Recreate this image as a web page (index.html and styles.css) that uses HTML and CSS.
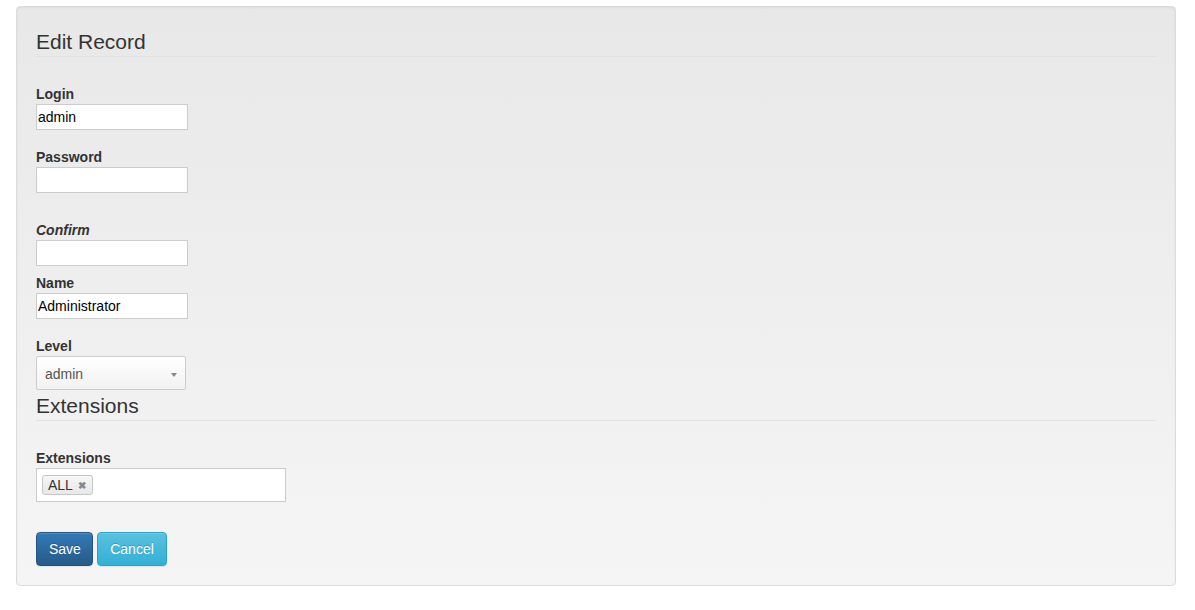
FILE: index.html
```html
<!DOCTYPE html>
<html lang="en">
<head>
    <meta charset="UTF-8">
    <title>Edit Record</title>
    <link rel="stylesheet" href="styles.css">
</head>
<body>
<form class="well">
    <div class="legend">Edit Record</div>

    <div class="field">
        <label for="login">Login</label>
        <input id="login" type="text" value="admin">
    </div>
    <div class="field field-loose">
        <label for="password">Password</label>
        <input id="password" type="password">
    </div>
    <div class="field field-tight">
        <label for="confirm"><em>Confirm</em></label>
        <input id="confirm" type="password">
    </div>
    <div class="field">
        <label for="name">Name</label>
        <input id="name" type="text" value="Administrator">
    </div>
    <div class="field field-last">
        <label>Level</label>
        <div class="select">
            <span>admin</span>
            <b class="arrow"></b>
        </div>
    </div>

    <div class="legend">Extensions</div>

    <div class="field field-buttons">
        <label>Extensions</label>
        <div class="tags">
            <span class="tag">ALL <b class="tag-close">&#10006;</b></span>
        </div>
    </div>

    <div class="buttons">
        <button type="button" class="btn btn-primary">Save</button>
        <button type="button" class="btn btn-info">Cancel</button>
    </div>
</form>
</body>
</html>
```

FILE: styles.css
```css
 body{
     margin: 0;
     padding: 6px 19px 0 16px;
     background: #fff;
     font-family: "Liberation Sans", Arial, sans-serif;
     font-size: 14px;
     color: #333;
 }
 .well{
     padding: 19px;
     border: 1px solid #dcdcdc;
     border-radius: 4px;
     background-image: linear-gradient(to bottom, #e8e8e8 0, #f5f5f5 100%);
     box-shadow: inset 0 1px 3px rgba(0, 0, 0, .05), 0 1px 0 rgba(255, 255, 255, .1);
 }
 .legend{
     font-size: 21px;
     line-height: 28px;
     padding-top: 2px;
     color: #333;
     border-bottom: 1px solid #e2e2e2;
     margin-bottom: 27px;
 }
 .field{
     margin-bottom: 17px;
 }
 .field-loose{
     margin-bottom: 27px;
 }
 .field-tight{
     margin-bottom: 7px;
 }
 .field-last{
     margin-bottom: 0;
 }
 .field-buttons{
     margin-bottom: 30px;
 }
 label{
     display: block;
     font-weight: bold;
     line-height: 20px;
 }
 input{
     display: block;
     box-sizing: border-box;
     width: 152px;
     height: 26px;
     margin: 0;
     padding: 0 1px;
     border: 1px solid #ccc;
     background: #fff;
     font-family: "Liberation Sans", Arial, sans-serif;
     font-size: 14px;
     color: #000;
     outline: none;
 }
 .select{
     position: relative;
     box-sizing: border-box;
     width: 150px;
     height: 34px;
     padding: 1px 8px 0;
     border: 1px solid #ccc;
     border-radius: 2px;
     background-image: linear-gradient(to bottom, #fff 0, #f2f2f2 100%);
     line-height: 32px;
     color: #555;
 }
 .arrow{
     position: absolute;
     right: 8px;
     top: 16px;
     border-left: 3px solid transparent;
     border-right: 3px solid transparent;
     border-top: 4px solid #888;
 }
 .tags{
     box-sizing: border-box;
     width: 250px;
     height: 34px;
     padding: 6px 5px;
     border: 1px solid #ccc;
     background: #fff;
 }
 .tag{
     display: inline-block;
     box-sizing: border-box;
     height: 20px;
     padding: 0 6px 0 5px;
     border: 1px solid #c6c6c6;
     border-radius: 3px;
     background-image: linear-gradient(to bottom, #f6f6f6 0, #e8e8e8 100%);
     line-height: 18px;
     color: #333;
 }
 .tag-close{
     margin-left: 2px;
     font-size: 10px;
     color: #888;
     vertical-align: 1px;
 }
 .buttons{
     display: flex;
     gap: 4px;
 }
 .btn{
     height: 34px;
     padding: 0 12px;
     border: 1px solid;
     border-radius: 4px;
     font-family: "Liberation Sans", Arial, sans-serif;
     font-size: 14px;
     color: #fff;
     text-shadow: 0 -1px 0 rgba(0, 0, 0, .2);
     box-shadow: inset 0 1px 0 rgba(255, 255, 255, .15), 0 1px 1px rgba(0, 0, 0, .075);
 }
 .btn-primary{
     width: 57px;
     border-color: #245580;
     background-image: linear-gradient(to bottom, #337ab7 0, #265a88 100%);
 }
 .btn-info{
     width: 70px;
     border-color: #28a4c9;
     background-image: linear-gradient(to bottom, #5bc0de 0, #31b0d5 100%);
 }
```
